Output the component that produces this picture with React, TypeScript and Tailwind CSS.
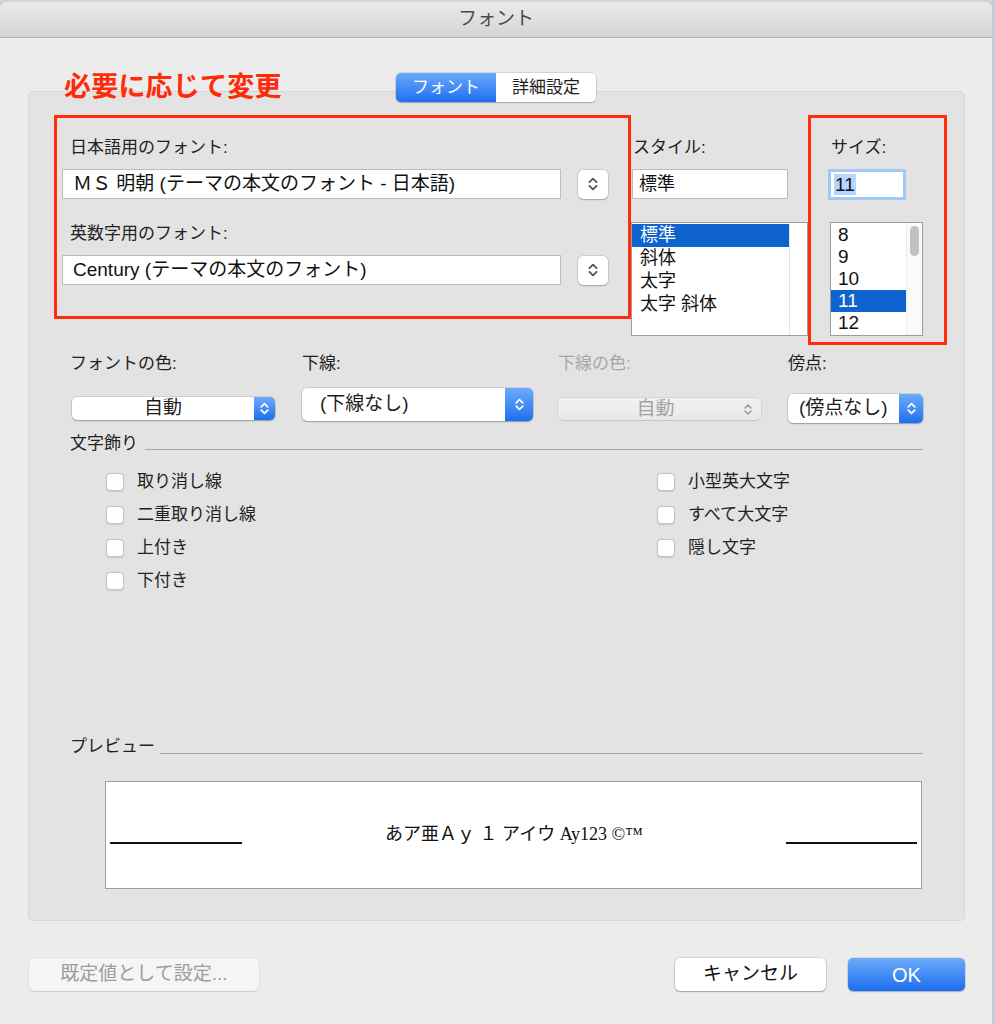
import React from "react";

const FONT = "font-['Liberation_Sans','Noto_Sans_CJK_JP',sans-serif]";

function Chevrons({ className = "" }: { className?: string }) {
  return (
    <svg viewBox="0 0 10 16" className={className} fill="none" stroke="currentColor" strokeWidth={1.5} strokeLinecap="round" strokeLinejoin="round">
      <path d="M2 6.5 L5 3.5 L8 6.5" />
      <path d="M2 9.5 L5 12.5 L8 9.5" />
    </svg>
  );
}

function Label({ children, muted = false }: { children: React.ReactNode; muted?: boolean }) {
  return (
    <div className={`text-[17px] leading-[20px] whitespace-nowrap ${muted ? "text-[#a6a6a6]" : "text-[#222]"}`}>
      {children}
    </div>
  );
}

function Stepper() {
  return (
    <div className="w-[30px] h-[29px] bg-white rounded-[5px] shadow-[0_0_0_0.5px_rgba(0,0,0,0.18),0_1px_1.5px_rgba(0,0,0,0.2)] flex items-center justify-center text-[#555]">
      <Chevrons className="w-[12px] h-[20px]" />
    </div>
  );
}

function Popup({ text, w, h, blueW, center = false, textPad = "pl-[18px]" }: { text: string; w: string; h: string; blueW: string; center?: boolean; textPad?: string }) {
  return (
    <div className={`${w} ${h} flex bg-white rounded-[5px] shadow-[0_0_0_0.5px_rgba(0,0,0,0.18),0_1px_1.5px_rgba(0,0,0,0.25)]`}>
      <div className={`flex-1 flex items-center text-[19px] text-[#1e1e1e] ${center ? "justify-center" : textPad}`}>{text}</div>
      <div className={`${blueW} h-full rounded-r-[5px] bg-gradient-to-b from-[#6cabfa] to-[#1a6ef0] flex items-center justify-center text-white`}>
        <Chevrons className="w-[11px] h-[19px]" />
      </div>
    </div>
  );
}

function Check({ label }: { label: string }) {
  return (
    <div className="h-[33px] flex items-center">
      <div className="w-[18px] h-[18px] bg-white rounded-[4px] border border-[#c4c4c4] shadow-[0_0.5px_1px_rgba(0,0,0,0.12)]" />
      <span className="ml-[13px] text-[17px] leading-[20px] text-[#222]">{label}</span>
    </div>
  );
}

export default function App() {
  const styles = ["標準", "斜体", "太字", "太字 斜体"];
  const sizes = ["8", "9", "10", "11", "12"];

  return (
    <div className={`w-[995px] h-[1024px] flex bg-[#c9cdd2] overflow-hidden ${FONT}`}>
      {/* window */}
      <div className="w-[992px] h-full flex flex-col">
        <div className="h-[2px] bg-[#d4d4d4]" />
        <div className="h-[36px] rounded-t-[6px] bg-gradient-to-b from-[#ebebeb] to-[#d4d4d4] border-b border-[#b3b3b3] flex items-center justify-center">
          <span className="text-[19px] text-[#4a4a4a]">フォント</span>
        </div>

        <div className="flex-1 bg-[#ececec] flex flex-col">
          {/* header: note + tabs */}
          <div className="relative z-10 mt-[35px] h-[29px] flex items-center">
            <div className="ml-[64px] w-[332px] text-[27px] leading-[29px] font-bold text-[#ff2b08] tracking-[0.2px]">
              必要に応じて変更
            </div>
            <div className="flex h-[29px] rounded-[5px] shadow-[0_0_0_0.5px_rgba(0,0,0,0.2),0_1px_1.5px_rgba(0,0,0,0.2)] overflow-hidden">
              <div className="w-[100px] bg-gradient-to-b from-[#69a8fa] to-[#1a6ff1] text-white text-[17px] flex items-center justify-center">
                フォント
              </div>
              <div className="w-[100px] bg-white text-[#1e1e1e] text-[17px] flex items-center justify-center">
                詳細設定
              </div>
            </div>
          </div>

          {/* panel */}
          <div className="-mt-[11px] ml-[28px] w-[937px] h-[830px] bg-[#e3e3e3] border border-[#d8d8d8] rounded-[5px] flex flex-col">
            {/* fonts / style / size */}
            <div className="flex items-start pt-[23px] pl-[25px]">
              <div className="w-[577px] h-[204px] border-[3px] border-[#ff2d0b] pl-[5px] pt-[20px]">
                <div className="ml-[8px]"><Label>日本語用のフォント:</Label></div>
                <div className="mt-[11px] flex items-center">
                  <div className="w-[499px] h-[30px] bg-white border border-[#bcbcbc] flex items-center pl-[10px] text-[19px] text-[#111]">
                    ＭＳ 明朝 (テーマの本文のフォント - 日本語)
                  </div>
                  <div className="ml-[17px]"><Stepper /></div>
                </div>
                <div className="ml-[8px] mt-[25px]"><Label>英数字用のフォント:</Label></div>
                <div className="mt-[11px] flex items-center">
                  <div className="w-[499px] h-[30px] bg-white border border-[#bcbcbc] flex items-center pl-[10px] text-[19px] text-[#111]">
                    Century (テーマの本文のフォント)
                  </div>
                  <div className="ml-[17px]"><Stepper /></div>
                </div>
              </div>

              {/* style */}
              <div className="w-[177px] pt-[23px]">
                <div className="ml-[2px]"><Label>スタイル:</Label></div>
                <div className="mt-[11px] ml-[1px] w-[156px] h-[30px] bg-white border border-[#bcbcbc] flex items-center pl-[6px] text-[18px] text-[#111]">
                  標準
                </div>
                <div className="mt-[23px] w-[177px] h-[114px] bg-white border border-[#9c9c9c] flex">
                  <div className="w-[157px] pt-[1px]">
                    {styles.map((s, i) => (
                      <div key={s} className={`h-[23px] flex items-center pl-[8px] text-[18px] ${i === 0 ? "bg-[#0f63cf] text-white" : "text-[#111]"}`}>
                        {s}
                      </div>
                    ))}
                  </div>
                  <div className="flex-1 border-l border-[#e4e4e4]" />
                </div>
              </div>

              {/* size */}
              <div className="w-[139px] h-[230px] border-[3px] border-[#ff2d0b] pt-[20px]">
                <div className="ml-[20px]"><Label>サイズ:</Label></div>
                <div className="mt-[11px] ml-[17px] w-[78px] h-[31px] bg-white border-[3px] border-[#a3c8f3] flex items-center pl-[3px]">
                  <span className="bg-[#b4d6fe] text-[19px] leading-[21px] text-[#111] px-[1px]">11</span>
                </div>
                <div className="mt-[22px] ml-[19px] w-[93px] h-[114px] bg-white border border-[#9c9c9c] flex">
                  <div className="flex-1 pt-[1px]">
                    {sizes.map((s) => (
                      <div key={s} className={`h-[22px] flex items-center pl-[7px] text-[19px] ${s === "11" ? "bg-[#0f63cf] text-white" : "text-[#111]"}`}>
                        {s}
                      </div>
                    ))}
                  </div>
                  <div className="w-[16px] border-l border-[#ececec] bg-[#fafafa] pt-[3px] flex justify-center">
                    <div className="w-[9px] h-[30px] rounded-full bg-[#c1c1c1]" />
                  </div>
                </div>
              </div>
            </div>

            {/* dropdown row */}
            <div className="mt-[9px] pl-[41px] flex items-start">
              <div className="w-[232px]">
                <Label>フォントの色:</Label>
                <div className="mt-[23px] ml-[2px]">
                  <Popup text="自動" w="w-[203px]" h="h-[23px]" blueW="w-[21px]" center />
                </div>
              </div>
              <div className="w-[256px]">
                <Label>下線:</Label>
                <div className="mt-[14px]">
                  <Popup text="(下線なし)" w="w-[231px]" h="h-[33px]" blueW="w-[28px]" />
                </div>
              </div>
              <div className="w-[230px]">
                <Label muted>下線の色:</Label>
                <div className="mt-[24px] w-[203px] h-[22px] rounded-[5px] bg-gradient-to-b from-[#f1f1f1] to-[#e9e9e9] shadow-[0_0_0_0.5px_rgba(0,0,0,0.12),0_1px_1px_rgba(0,0,0,0.08)] flex items-center">
                  <div className="flex-1 text-center text-[19px] text-[#a3a3a3] pl-[10px]">自動</div>
                  <Chevrons className="w-[10px] h-[17px] mr-[8px] text-[#9a9a9a]" />
                </div>
              </div>
              <div>
                <Label>傍点:</Label>
                <div className="mt-[20px]">
                  <Popup text="(傍点なし)" w="w-[135px]" h="h-[29px]" blueW="w-[24px]" textPad="pl-[11px]" />
                </div>
              </div>
            </div>

            {/* 文字飾り */}
            <div className="mt-[11px] ml-[41px] mr-[41px] flex items-end">
              <Label>文字飾り</Label>
              <div className="flex-1 ml-[7px] mb-[4px] h-px bg-[#a8a8a8]" />
            </div>
            <div className="mt-[11px] pl-[77px] flex">
              <div className="w-[551px]">
                <Check label="取り消し線" />
                <Check label="二重取り消し線" />
                <Check label="上付き" />
                <Check label="下付き" />
              </div>
              <div>
                <Check label="小型英大文字" />
                <Check label="すべて大文字" />
                <Check label="隠し文字" />
              </div>
            </div>

            {/* preview */}
            <div className="mt-[140px] ml-[41px] mr-[41px] flex items-end">
              <Label>プレビュー</Label>
              <div className="flex-1 ml-[5px] mb-[3px] h-px bg-[#a8a8a8]" />
            </div>
            <div className="mt-[24px] ml-[76px] w-[817px] h-[108px] bg-white border border-[#9d9d9d] flex items-end pb-[44px] px-[4px]">
              <div className="w-[132px] h-[2px] bg-[#111]" />
              <div className="flex-1 text-center text-[18px] leading-[20px] text-[#111] font-['Liberation_Serif','Noto_Sans_CJK_JP',serif]">
                あア亜Ａｙ １ アイウ Ay123 ©™
              </div>
              <div className="w-[131px] h-[2px] bg-[#111]" />
            </div>
          </div>

          {/* buttons */}
          <div className="mt-[37px] flex items-center pl-[29px] pr-[27px]">
            <div className="w-[230px] h-[33px] rounded-[5px] bg-[#f5f5f5] shadow-[0_0_0_0.5px_rgba(0,0,0,0.1),0_1px_1px_rgba(0,0,0,0.08)] flex items-center justify-center text-[19px] text-[#9c9c9c]">
              既定値として設定...
            </div>
            <div className="flex-1" />
            <div className="w-[151px] h-[33px] rounded-[5px] bg-white shadow-[0_0_0_0.5px_rgba(0,0,0,0.2),0_1px_1.5px_rgba(0,0,0,0.25)] flex items-center justify-center text-[19px] text-[#111]">
              キャンセル
            </div>
            <div className="ml-[22px] w-[117px] h-[33px] rounded-[5px] bg-gradient-to-b from-[#6cabfa] to-[#176cf0] shadow-[0_0_0_0.5px_rgba(0,0,0,0.15),0_1px_1.5px_rgba(0,0,0,0.2)] flex items-center justify-center text-[20px] text-white">
              OK
            </div>
          </div>
        </div>
      </div>
      <div className="w-[3px] h-full bg-[#c4cbd3]" />
    </div>
  );
}
